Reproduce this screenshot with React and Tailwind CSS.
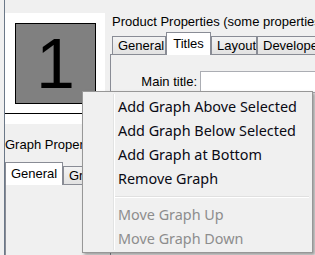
import React from 'react';

const uiFont = { fontFamily: '"Liberation Sans", Arial, sans-serif' };
const menuFont = { fontFamily: '"Noto Sans", "Open Sans", sans-serif' };

function Tab({ label, selected, width }) {
    if (selected) {
        return (
            <div className={`relative z-10 -mb-px h-[23px] ${width} flex items-start justify-center pt-[3px] bg-white border border-b-0 border-[#898c95] text-[13px] leading-[16px] text-black`}>
                {label}
            </div>
        );
    }
    return (
        <div className={`h-[18px] ${width} flex items-center justify-start pl-[5px] bg-gradient-to-b from-[#f3f3f3] to-[#e2e2e2] border border-b-0 border-[#898c95] text-[13px] leading-[16px] text-black whitespace-nowrap overflow-hidden`}>
            {label}
        </div>
    );
}

function MenuItem({ label, disabled }) {
    return (
        <div className={`h-[24px] flex items-center pl-[35px] text-[14.4px] leading-[20px] whitespace-nowrap ${disabled ? 'text-[#8d8d8d]' : 'text-[#0a0a14]'}`}>
            {label}
        </div>
    );
}

export default function App() {
    return (
        <div className="relative w-[315px] h-[255px] overflow-hidden bg-[#f0f0f0] flex" style={uiFont}>
            {/* left column */}
            <div className="w-[110px] shrink-0 pl-[4px] flex">
                <div className="flex-1 border-l border-[#6b7888] flex flex-col">
                    <div className="mt-[13px] w-[100px] h-[111px] bg-white flex flex-col">
                        <div className="ml-[10px] mt-[10px] w-[81px] h-[81px] border border-black bg-[#808080] flex items-center justify-center">
                            <span className="text-[70px] leading-none text-black">1</span>
                        </div>
                        <div className="mt-[9px] h-px bg-black w-full" />
                    </div>

                    <div className="mt-[13px] h-[16px] text-[13px] leading-[16px] whitespace-nowrap overflow-hidden">
                        Graph Properties
                    </div>

                    <div className="mt-[9px] flex items-end">
                        <Tab label="General" selected width="w-[58px]" />
                        <Tab label="Graph" width="w-[60px]" />
                    </div>
                    <div className="flex-1 border-t border-l border-[#898c95] bg-[#f0f0f0]" />
                </div>
            </div>

            {/* right column */}
            <div className="flex-1 flex flex-col min-w-0">
                <div className="mt-[14px] pl-[2px] h-[16px] text-[13px] leading-[16px] whitespace-nowrap">
                    Product Properties (some properties editable)
                </div>
                <div className="mt-[2px] pl-[2px] flex items-end whitespace-nowrap">
                    <Tab label="General" width="w-[54px] shrink-0" />
                    <Tab label="Titles" selected width="w-[45px] shrink-0" />
                    <Tab label="Layout" width="w-[46px] shrink-0" />
                    <Tab label="Developer" width="w-[74px] shrink-0" />
                </div>
                <div className="flex-1 border-t border-l border-[#898c95] bg-[#f0f0f0]">
                    <div className="mt-[16px] flex items-center">
                        <div className="w-[86px] shrink-0 text-right text-[13px] leading-[16px]">Main title:</div>
                        <div className="ml-[3px] h-[22px] w-[140px] shrink-0 bg-white border border-[#abadb3]" />
                    </div>
                </div>
            </div>

            {/* context menu */}
            <div className="absolute left-[82px] top-[91px] w-[231px] h-[162px] bg-[#f0f0f0] border border-[#979797] shadow-[2px_2px_3px_rgba(0,0,0,0.35)] pt-[3px]" style={menuFont}>
                <div className="absolute left-[30px] top-[2px] bottom-[2px] w-[2px] border-l border-[#e2e3e3] border-r border-r-white" />
                <div className="relative">
                    <MenuItem label="Add Graph Above Selected" />
                    <MenuItem label="Add Graph Below Selected" />
                    <MenuItem label="Add Graph at Bottom" />
                    <MenuItem label="Remove Graph" />
                    <div className="h-[12px] flex items-center pl-[32px] pr-[3px]">
                        <div className="w-full h-[2px] border-t border-[#e0e0e0] border-b border-b-white" />
                    </div>
                    <MenuItem label="Move Graph Up" disabled />
                    <MenuItem label="Move Graph Down" disabled />
                </div>
            </div>
        </div>
    );
}
